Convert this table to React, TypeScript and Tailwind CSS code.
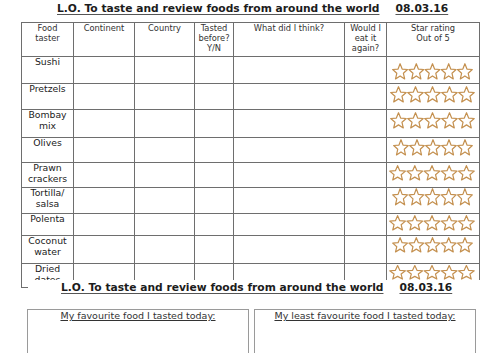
import React from 'react';

interface FoodRow {
  name: string[];
  // star strip: left offset, top offset, width, height
  star: [number, number, number, number];
}

const rows: FoodRow[] = [
  { name: ['Sushi'], star: [5, 6, 81, 17] },
  { name: ['Pretzels'], star: [3, 2, 85, 17] },
  { name: ['Bombay', 'mix'], star: [3, 2, 85, 17] },
  { name: ['Olives'], star: [6, 1, 80, 17] },
  { name: ['Prawn', 'crackers'], star: [2, 2, 86, 16] },
  { name: ['Tortilla/', 'salsa'], star: [5, 0, 81, 18] },
  { name: ['Polenta'], star: [2, 1, 86, 16] },
  { name: ['Coconut', 'water'], star: [5, 1, 81, 16] },
  { name: ['Dried', 'dates'], star: [2, 1, 86, 15] },
];

const headers = [
  ['Food', 'taster'],
  ['Continent'],
  ['Country'],
  ['Tasted', 'before?', 'Y/N'],
  ['What did I think?'],
  ['Would I', 'eat it', 'again?'],
  ['Star rating', 'Out of 5'],
];

const starPoints = (ox: number) => {
  const pts: string[] = [];
  for (let k = 0; k < 10; k++) {
    const a = ((-90 + k * 36) * Math.PI) / 180;
    const r = k % 2 === 0 ? 9.6 : 4.3;
    pts.push(`${(ox + 10 + r * Math.cos(a)).toFixed(2)},${(10.4 + r * Math.sin(a)).toFixed(2)}`);
  }
  return pts.join(' ');
};

const Stars: React.FC<{ s: [number, number, number, number] }> = ({ s }) => (
  <svg
    width={s[2]}
    height={s[3]}
    viewBox="0 0 100 19.4"
    preserveAspectRatio="none"
    style={{ marginLeft: s[0], marginTop: s[1] }}
    className="block"
  >
    {[0, 20, 40, 60, 80].map(ox => (
      <polygon
        key={ox}
        points={starPoints(ox)}
        fill="#fff"
        stroke="#c4904f"
        strokeWidth={1.2}
        strokeLinejoin="round"
        vectorEffect="non-scaling-stroke"
      />
    ))}
  </svg>
);

const Title: React.FC = () => (
  <div className="flex font-bold text-[10.7px] leading-[14px] text-[#1c1c1c]">
    <span className="underline decoration-[#555] underline-offset-[2px]">L.O. To taste and review foods from around the world</span>
    <span className="ml-[16px] underline decoration-[#555] underline-offset-[2px]">08.03.16</span>
  </div>
);

const cell = 'border-r border-b border-[#6e6e6e]';

export default function App() {
  return (
    <div className="w-[500px] h-[353px] overflow-hidden bg-white" style={{ fontFamily: '"DejaVu Sans", sans-serif' }}>
      <div className="h-[280px] overflow-hidden">
        <div className="h-[22px] pt-[2px] pl-[57px]">
          <Title />
        </div>
        <div className="ml-[21px] w-[459px] grid grid-cols-[52px_61px_60px_39px_111px_42px_93px] grid-rows-[34px_27px_26px_28px_25px_25px_26px_22px_28px_28px] border-l border-t border-[#6e6e6e]">
          {headers.map((h, i) => (
            <div key={i} className={`${cell} text-center text-[8.3px] leading-[10px] text-[#333]`}>
              {h.map(line => (
                <div key={line}>{line}</div>
              ))}
            </div>
          ))}
          {rows.map(row => (
            <React.Fragment key={row.name.join(' ')}>
              <div className={`${cell} text-center text-[9.3px] leading-[10.5px] text-[#222]`}>
                {row.name.map(line => (
                  <div key={line}>{line}</div>
                ))}
              </div>
              <div className={cell} />
              <div className={cell} />
              <div className={cell} />
              <div className={cell} />
              <div className={cell} />
              <div className={cell}>
                <Stars s={row.star} />
              </div>
            </React.Fragment>
          ))}
        </div>
      </div>

      <div className="flex h-[29px] items-start">
        <div className="ml-[21px] w-[7px] h-[8px] border-l border-b border-[#6e6e6e]" />
        <div className="ml-[33px] mt-[1px]">
          <Title />
        </div>
      </div>

      <div className="flex ml-[27px] gap-[5px]">
        <div className="w-[222px] h-[60px] border-[1.5px] border-[#9a9a9a] text-center text-[9.5px] leading-[12px] text-[#333]">
          <span className="underline">My favourite food I tasted today:</span>
        </div>
        <div className="w-[222px] h-[60px] border-[1.5px] border-[#9a9a9a] text-center text-[9.5px] leading-[12px] text-[#333]">
          <span className="underline">My least favourite food I tasted today:</span>
        </div>
      </div>
    </div>
  );
}
